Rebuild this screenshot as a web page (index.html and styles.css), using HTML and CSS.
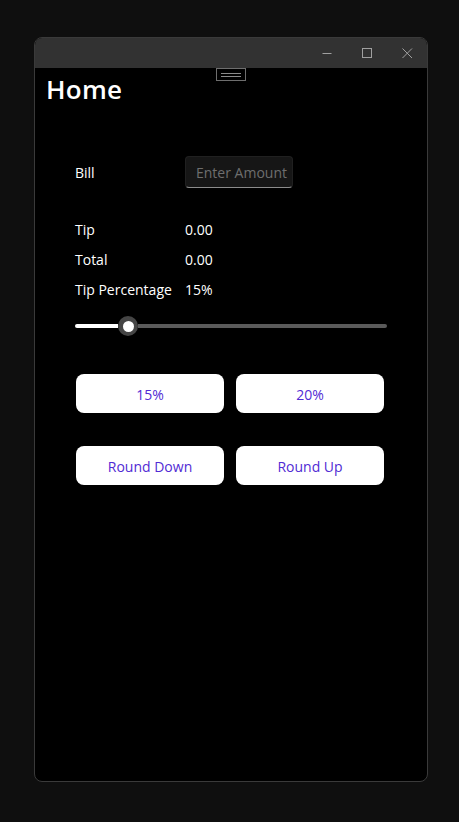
FILE: index.html
```html
<!DOCTYPE html>
<html lang="en">
<head>
<meta charset="utf-8">
<title>Home</title>
<link rel="stylesheet" href="styles.css">
</head>
<body>
<div class="window">
  <div class="titlebar">
    <div class="caption-btn">
      <svg width="12" height="12" viewBox="0 0 12 12"><path d="M1.5 6.5h9" stroke="#a0a0a0" stroke-width="1"/></svg>
    </div>
    <div class="caption-btn">
      <svg width="12" height="12" viewBox="0 0 12 12"><rect x="1.5" y="1.5" width="9" height="9" fill="none" stroke="#a0a0a0" stroke-width="1"/></svg>
    </div>
    <div class="caption-btn">
      <svg width="12" height="12" viewBox="0 0 12 12"><path d="M1.5 1.5l9.5 9.5M11 1.5l-9.5 9.5" stroke="#a0a0a0" stroke-width="1"/></svg>
    </div>
  </div>
  <div class="content">
    <div class="grip"><span></span><span></span></div>
    <h1 class="title">Home</h1>
    <div class="form">
      <div class="row bill-row">
        <span class="label">Bill</span>
        <div class="entry"><span class="placeholder">Enter Amount</span></div>
      </div>
      <div class="rows">
        <div class="row"><span class="label">Tip</span><span class="value">0.00</span></div>
        <div class="row"><span class="label">Total</span><span class="value">0.00</span></div>
        <div class="row"><span class="label">Tip Percentage</span><span class="value">15%</span></div>
      </div>
      <div class="slider">
        <div class="track">
          <div class="fill"></div>
          <div class="thumb"><div class="thumb-dot"></div></div>
          <div class="rest"></div>
        </div>
      </div>
      <div class="buttons">
        <button class="btn">15%</button>
        <button class="btn">20%</button>
      </div>
      <div class="buttons second">
        <button class="btn">Round Down</button>
        <button class="btn">Round Up</button>
      </div>
    </div>
  </div>
</div>
</body>
</html>
```
FILE: styles.css
```css
html, body {
  margin: 0;
  padding: 0;
  background: #0f0f0f;
  height: 100%;
}
body {
  font-family: "Open Sans", "Noto Sans", sans-serif;
  overflow: hidden;
}
.window {
  margin: 37px 0 0 34px;
  width: 392px;
  height: 743px;
  border: 1px solid #3a3a3a;
  border-radius: 8px;
  background: #000;
  display: flex;
  flex-direction: column;
  overflow: hidden;
}
.titlebar {
  height: 30px;
  background: #323232;
  display: flex;
  justify-content: flex-end;
  align-items: center;
  flex: none;
}
.caption-btn {
  width: 40px;
  height: 30px;
  display: flex;
  align-items: center;
  justify-content: center;
}
.caption-btn svg { display: block; }
.content {
  position: relative;
  flex: 1;
}
.grip {
  position: absolute;
  left: 181px;
  top: 0;
  width: 28px;
  height: 11px;
  border: 1px solid #6e6e6e;
  display: flex;
  flex-direction: column;
  align-items: center;
  justify-content: center;
  gap: 2px;
}
.grip span {
  display: block;
  width: 20px;
  height: 1px;
  background: #8a8a8a;
}
.title {
  margin: 0 0 0 11px;
  padding-top: 4px;
  font-size: 26px;
  line-height: 34px;
  font-weight: 600;
  color: #fff;
  letter-spacing: 0.3px;
}
.form {
  margin: 50px 40px 0 40px;
  display: flex;
  flex-direction: column;
}
.row {
  display: flex;
  align-items: center;
  height: 20px;
  font-size: 14px;
  line-height: 20px;
  color: #fff;
}
.bill-row .label {
  padding-top: 1px;
}
.label {
  width: 110px;
  flex: none;
}
.bill-row {
  height: 32px;
}
.entry {
  background: #161616;
  border: 1px solid #202020;
  border-bottom: 1px solid #8c8c8c;
  border-radius: 4px;
  display: flex;
  align-items: center;
  padding-left: 10px;
  box-sizing: border-box;
  width: 108px;
  height: 32px;
  overflow: hidden;
}
.placeholder {
  color: #6e6e6e;
  font-size: 14px;
  white-space: nowrap;
  padding-top: 1px;
}
.rows {
  margin-top: 32px;
  display: flex;
  flex-direction: column;
  gap: 10px;
}
.slider {
  margin-top: 16px;
  height: 20px;
  display: flex;
  align-items: center;
}
.track {
  width: 312px;
  display: flex;
  align-items: center;
}
.fill {
  width: 43px;
  height: 4px;
  background: #fff;
  border-radius: 2px 0 0 2px;
}
.thumb {
  width: 20px;
  height: 20px;
  border-radius: 50%;
  background: #454545;
  display: flex;
  align-items: center;
  justify-content: center;
  flex: none;
}
.thumb-dot {
  width: 11px;
  height: 11px;
  border-radius: 50%;
  background: #fff;
}
.rest {
  flex: 1;
  height: 4px;
  background: #5a5a5a;
  border-radius: 0 2px 2px 0;
}
.buttons {
  margin: 38px 0 0 1px;
  width: 308px;
  display: grid;
  grid-template-columns: 148px 148px;
  gap: 12px;
}
.buttons.second {
  margin-top: 33px;
}
.btn {
  height: 39px;
  background: #fff;
  border: none;
  border-radius: 8px;
  color: #512bd4;
  font-family: "Open Sans", "Noto Sans", sans-serif;
  font-size: 14px;
  padding: 2px 0 0 0;
}
```
